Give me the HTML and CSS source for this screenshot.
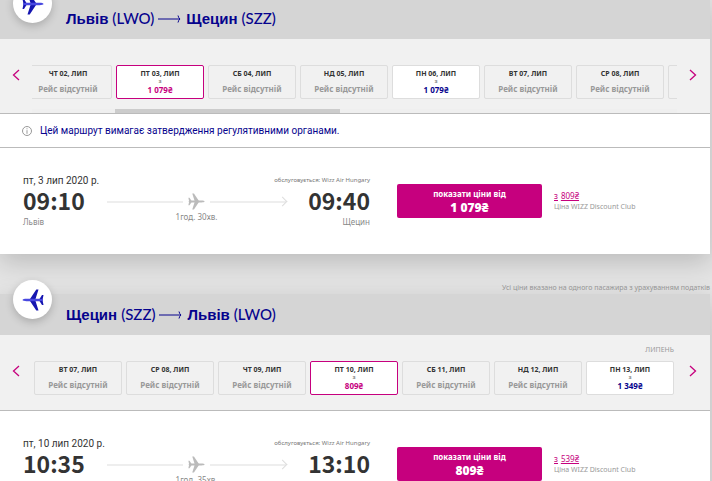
FILE: index.html
```html
<!DOCTYPE html>
<html lang="uk">
  <head>
    <meta charset="UTF-8" />
    <meta name="viewport" content="width=device-width, initial-scale=1.0" />
    <title>Вибір рейсу</title>
    <link rel="stylesheet" href="styles.css">
  </head>
  <body>
    <svg class="symbols" aria-hidden="true">
      <symbol id="plane" viewBox="0 0 22 22">
        <path class="wing" d="M5.500 0.500h2.200L14 10v2L7.700 21.500H5.500L8.500 12v-2z M0.500 6H2L4.500 10v2L2 16H0.500L1.500 11z" />
        <path class="hull" d="M1 10.200L4 9.800h13.500c2 0 4 .5 4 1.200s-2 1.200-4 1.200H4l-3-.4z" />
      </symbol>
      <symbol id="long-arrow" viewBox="0 0 24 9">
        <path d="M0 5h21M20 1.500q.5 2.500 2 3.500q-1.500 1-2 3.500" />
      </symbol>
    </svg>

    <main class="page">
      <section class="journey">
        <header class="route">
          <span class="badge"><svg><use href="#plane" /></svg></span>
          <h2><b>Львів</b> (LWO) <svg class="to"><use href="#long-arrow" /></svg> <b>Щецин</b> (SZZ)</h2>
        </header>

        <div class="calendar">
          <button class="nav" aria-label="Попередні дати"><svg viewBox="0 0 8 12"><path d="M7 1L1.500 6L7 11" /></svg></button>
          <div class="dates">
            <div class="days scrolled">
              <button class="day"><span class="date">ЧТ 02, ЛИП</span><span class="none">Рейс відсутній</span></button>
              <button class="day selected"><span class="date">ПТ 03, ЛИП</span><small>з</small><span class="price">1 079₴</span></button>
              <button class="day"><span class="date">СБ 04, ЛИП</span><span class="none">Рейс відсутній</span></button>
              <button class="day"><span class="date">НД 05, ЛИП</span><span class="none">Рейс відсутній</span></button>
              <button class="day available"><span class="date">ПН 06, ЛИП</span><small>з</small><span class="price">1 079₴</span></button>
              <button class="day"><span class="date">ВТ 07, ЛИП</span><span class="none">Рейс відсутній</span></button>
              <button class="day"><span class="date">СР 08, ЛИП</span><span class="none">Рейс відсутній</span></button>
              <button class="day" aria-label="Наступна дата"></button>
            </div>
            <div class="track"><div class="thumb"></div></div>
          </div>
          <button class="nav next" aria-label="Наступні дати"><svg viewBox="0 0 8 12"><path d="M1 1L6.500 6L1 11" /></svg></button>
        </div>

        <p class="notice">
          <svg viewBox="0 0 10 10"><circle cx="5" cy="5" r="4.500" /><path d="M5 4.200V7.800M5 2.300V3.300" /></svg>
          Цей маршрут вимагає затвердження регулятивними органами.
        </p>

        <div class="flight">
          <div class="leg">
            <div class="meta"><span class="when">пт, 3 лип 2020 р.</span><span class="operator">обслуговується: Wizz Air Hungary</span></div>
            <div class="times">
              <time>09:10</time>
              <div class="path"><i></i><svg class="mini"><use href="#plane" /></svg><i class="end"></i></div>
              <time>09:40</time>
            </div>
            <div class="places"><span>Львів</span><span class="duration">1год. 30хв.</span><span>Щецин</span></div>
          </div>
          <button class="show"><span>показати ціни від</span><strong>1 079₴</strong></button>
          <div class="club"><a href="#club"><span>з</span> <span>809₴</span></a><span>Ціна WIZZ Discount Club</span></div>
        </div>
      </section>

      <p class="taxes">Усі ціни вказано на одного пасажира з урахуванням податків</p>

      <section class="journey">
        <header class="route">
          <span class="badge back"><svg><use href="#plane" /></svg></span>
          <h2><b>Щецин</b> (SZZ) <svg class="to"><use href="#long-arrow" /></svg> <b>Львів</b> (LWO)</h2>
        </header>

        <div class="calendar">
          <button class="nav" aria-label="Попередні дати"><svg viewBox="0 0 8 12"><path d="M7 1L1.500 6L7 11" /></svg></button>
          <div class="dates">
            <span class="month">ЛИПЕНЬ</span>
            <div class="days">
              <button class="day"><span class="date">ВТ 07, ЛИП</span><span class="none">Рейс відсутній</span></button>
              <button class="day"><span class="date">СР 08, ЛИП</span><span class="none">Рейс відсутній</span></button>
              <button class="day"><span class="date">ЧТ 09, ЛИП</span><span class="none">Рейс відсутній</span></button>
              <button class="day selected"><span class="date">ПТ 10, ЛИП</span><small>з</small><span class="price">809₴</span></button>
              <button class="day"><span class="date">СБ 11, ЛИП</span><span class="none">Рейс відсутній</span></button>
              <button class="day"><span class="date">НД 12, ЛИП</span><span class="none">Рейс відсутній</span></button>
              <button class="day available"><span class="date">ПН 13, ЛИП</span><small>з</small><span class="price">1 349₴</span></button>
            </div>
          </div>
          <button class="nav next" aria-label="Наступні дати"><svg viewBox="0 0 8 12"><path d="M1 1L6.500 6L1 11" /></svg></button>
        </div>

        <div class="flight">
          <div class="leg">
            <div class="meta"><span class="when">пт, 10 лип 2020 р.</span><span class="operator">обслуговується: Wizz Air Hungary</span></div>
            <div class="times">
              <time>10:35</time>
              <div class="path"><i></i><svg class="mini"><use href="#plane" /></svg><i class="end"></i></div>
              <time>13:10</time>
            </div>
            <div class="places"><span>Щецин</span><span class="duration">1год. 35хв.</span><span>Львів</span></div>
          </div>
          <button class="show"><span>показати ціни від</span><strong>809₴</strong></button>
          <div class="club"><a href="#club"><span>з</span> <span>539₴</span></a><span>Ціна WIZZ Discount Club</span></div>
        </div>
      </section>
    </main>
  </body>
</html>
```

FILE: styles.css
```css
* {
  box-sizing: border-box;
}
body {
  margin: 0;
  height: 100vh;
  overflow: hidden;
  background-color: #e4e4e4;
  font-family: "Noto Sans", "Open Sans", sans-serif;
  color: #333;
}
button {
  font-family: inherit;
  cursor: pointer;
}
p,
h2 {
  margin: 0;
}
svg {
  display: block;
  flex: none;
}
.symbols {
  position: absolute;
  width: 0;
  height: 0;
}
.page {
  display: flex;
  flex-direction: column;
  margin: -2px 2px 0 0;
}
.journey {
  background-color: #fff;
  box-shadow: 0 8px 24px rgba(0, 0, 0, 0.18);
}
.route {
  position: relative;
  height: 41px;
  padding-left: 66px;
  background-color: #d5d5d5;
}
.badge {
  position: absolute;
  left: 13px;
  top: -14px;
  width: 39px;
  height: 39px;
  display: flex;
  align-items: center;
  justify-content: center;
  border-radius: 50%;
  background-color: #fff;
  box-shadow: 0 3px 8px rgba(0, 0, 0, 0.2);
}
.badge svg {
  width: 22px;
  height: 22px;
  fill: #1515b0;
  color: #4848e0;
}
.badge.back svg {
  transform: rotate(180deg);
}
.hull {
  fill: currentColor;
}
.route h2 {
  display: flex;
  align-items: center;
  gap: 4px;
  height: 40px;
  font-family: Lato, sans-serif;
  font-size: 15px;
  font-weight: 500;
  color: #06038d;
}
.route b {
  font-family: "Liberation Sans", sans-serif;
  font-weight: 700;
}
.to {
  width: 24px;
  height: 9px;
  fill: none;
  stroke: #06038d;
}

.calendar {
  display: flex;
  align-items: flex-start;
  background-color: #f1f1f1;
  border-bottom: 1px solid #bbb;
}
.nav {
  width: 32px;
  height: 20px;
  margin-top: 26px;
  padding: 0 0 0 12px;
  border: none;
  background: none;
}
.nav.next {
  width: 33px;
}
.nav svg {
  width: 8px;
  height: 12px;
  fill: none;
  stroke: #c6007e;
  stroke-width: 1.3;
}
.dates {
  flex: 1;
  min-width: 0;
  overflow: hidden;
}
.month {
  display: block;
  height: 26px;
  padding: 2px 3px 0 0;
  font-size: 7px;
  line-height: 26px;
  text-align: right;
  color: #999;
}
.days {
  display: flex;
  gap: 4px;
  margin: 0 0 15px 2px;
}
.days.scrolled {
  margin: 26px 0 10px -8px;
}
.day {
  flex: 0 0 88px;
  height: 34px;
  padding: 2px 0;
  display: flex;
  flex-direction: column;
  align-items: center;
  justify-content: space-between;
  border: 1px solid #ddd;
  border-radius: 2px;
  background-color: #f1f1f1;
  color: #333;
  font-size: 7px;
  font-weight: 700;
  line-height: 11px;
}
.none {
  font-size: 8px;
  line-height: 14px;
  color: #999;
}
.day small {
  font-size: 6px;
  line-height: 4px;
  color: #888;
}
.price {
  font-size: 8px;
  line-height: 14px;
  color: #06038d;
}
.available,
.selected {
  background-color: #fff;
}
.selected {
  border-color: #c6007e;
}
.selected .price {
  color: #c6007e;
}
.track {
  padding-left: 83px;
  background-color: #efefef;
}
.thumb {
  width: 40%;
  height: 4px;
  background-color: #ccc;
}

.notice {
  display: flex;
  align-items: center;
  gap: 8px;
  height: 34px;
  padding-left: 22px;
  border-bottom: 1px solid #bbb;
  font-family: Roboto, sans-serif;
  font-size: 10px;
  color: #06038d;
}
.notice svg {
  width: 10px;
  height: 10px;
  fill: none;
  stroke: #999;
}

.flight {
  display: flex;
  align-items: flex-start;
  height: 106px;
  padding: 25px 23px 0;
}
.leg {
  flex: 0 0 347px;
}
.meta,
.times,
.places {
  display: flex;
  justify-content: space-between;
  align-items: center;
}
.meta {
  height: 14px;
}
.when {
  font-family: Roboto, sans-serif;
  font-size: 10px;
}
.operator {
  font-size: 6px;
  color: #777;
}
.times {
  height: 29px;
}
time {
  padding-bottom: 2px;
  font-family: "Noto Sans CJK SC", sans-serif;
  font-size: 23px;
  font-weight: 700;
  line-height: 27px;
}
.path {
  flex: 1;
  display: flex;
  align-items: center;
  gap: 5px;
  margin: 0 22px;
}
.path i {
  flex: 1;
  height: 2px;
  background-color: #eee;
}
.path .end {
  display: flex;
  align-items: center;
  justify-content: flex-end;
}
.path .end::after {
  content: "";
  width: 6px;
  height: 6px;
  border: solid #ddd;
  border-width: 1px 1px 0 0;
  transform: rotate(45deg);
}
.mini {
  width: 17px;
  height: 17px;
  fill: #bbb;
  color: #bbb;
}
.places {
  position: relative;
  height: 12px;
  font-size: 8px;
  line-height: 12px;
  color: #888;
}
.duration {
  position: absolute;
  left: 50%;
  top: -5px;
  transform: translateX(-50%);
}
.show {
  flex: 0 0 145px;
  height: 34px;
  margin: 11px 12px 0 27px;
  padding: 0;
  display: flex;
  flex-direction: column;
  align-items: center;
  justify-content: center;
  border: none;
  border-radius: 2px;
  background-color: #c6007e;
  color: #fff;
  font-size: 8px;
  font-weight: 700;
  line-height: 14px;
}
.show strong {
  font-size: 12px;
}
.club {
  margin-top: 17px;
  display: flex;
  flex-direction: column;
  font-size: 7px;
  line-height: 11px;
  color: #999;
}
.club a {
  display: flex;
  gap: 3px;
  font-size: 8px;
  color: #c6007e;
}
.club a span {
  text-decoration: underline;
}
.taxes {
  height: 40px;
  padding-top: 28px;
  font-size: 7px;
  line-height: 12px;
  text-align: right;
  color: #999;
}
```
